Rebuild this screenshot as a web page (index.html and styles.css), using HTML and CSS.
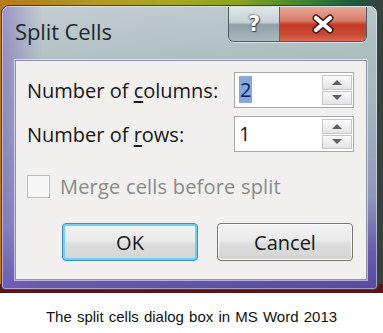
FILE: index.html
```html
<!DOCTYPE html>
<html>
<head>
<meta charset="utf-8">
<link rel="stylesheet" href="styles.css">
</head>
<body>
<div class="desktop">
  <div class="window">
    <div class="titlebar">
      <span class="title">Split Cells</span>
      <div class="caption-btns">
        <span class="cbtn help">?</span>
        <span class="cbtn close">
          <svg width="26" height="20" viewBox="0 0 26 20">
            <path d="M6 4 L20 16 M20 4 L6 16" stroke="#3a1a14" stroke-width="7" stroke-linecap="round"/>
            <path d="M6 4 L20 16 M20 4 L6 16" stroke="#ffffff" stroke-width="4.2" stroke-linecap="round"/>
          </svg>
        </span>
      </div>
    </div>
    <div class="panel">
      <div class="field">
        <span class="label">Number of <u>c</u>olumns:</span>
        <div class="spin">
          <span class="value"><span class="sel">2</span></span>
          <div class="arrows">
            <span class="arrow"><span class="tri up"></span></span>
            <span class="arrow"><span class="tri down"></span></span>
          </div>
        </div>
      </div>
      <div class="field">
        <span class="label">Number of <u>r</u>ows:</span>
        <div class="spin">
          <span class="value">1</span>
          <div class="arrows">
            <span class="arrow"><span class="tri up"></span></span>
            <span class="arrow"><span class="tri down"></span></span>
          </div>
        </div>
      </div>
      <div class="check-row">
        <span class="checkbox"></span>
        <span class="check-label">Merge cells before split</span>
      </div>
      <div class="buttons">
        <span class="btn ok">OK</span>
        <span class="btn">Cancel</span>
      </div>
    </div>
  </div>
</div>
<p class="caption">The split cells dialog box in MS Word 2013</p>
</body>
</html>
```
FILE: styles.css
```css
* { box-sizing: border-box; }
body {
  margin: 0;
  background: #ffffff;
  width: 383px;
  height: 333px;
  overflow: hidden;
}
.desktop {
  width: 383px;
  height: 293px;
  padding: 5px 5px 3px 1px;
  background:
    linear-gradient(to bottom, transparent 97%, #5a1616 97%),
    linear-gradient(90deg, #b8781c 0%, #b09a20 25%, #a8a81c 45%, #8ca41e 62%, #3e8236 80%, #1f5a3a 92%, #38403c 100%);
}
.window {
  width: 377px;
  height: 285px;
  border: 1px solid #3a4048;
  border-radius: 8px 8px 4px 4px;
  background:
    linear-gradient(90deg, rgba(120,96,190,0.55) 0, rgba(120,96,190,0.35) 14px, rgba(120,96,190,0) 40px),
    linear-gradient(175deg, #c6ced3 0%, #aebfc0 22%, #a2b8bc 40%, #8f98bc 70%, #6a5cab 88%, #564a9e 100%);
  box-shadow: inset 0 0 0 1px rgba(255,255,255,0.45);
  display: flex;
  flex-direction: column;
  padding: 0 10px 9px 13px;
}
.titlebar {
  height: 54px;
  display: flex;
  justify-content: space-between;
  align-items: flex-start;
}
.title {
  font-family: "Open Sans", "Noto Sans", sans-serif;
  font-size: 22px;
  color: #1c2830;
  margin-top: 10px;
  letter-spacing: -0.1px;
}
.caption-btns {
  display: flex;
  height: 35px;
  margin-top: 1px;
  border: 1px solid #4e5a62;
  border-top: none;
  border-radius: 0 0 6px 6px;
  overflow: hidden;
  box-shadow: 0 1px 0 rgba(255,255,255,0.5);
}
.cbtn {
  display: flex;
  align-items: center;
  justify-content: center;
  height: 100%;
}
.help {
  width: 51px;
  border-right: 1px solid #5a666c;
  background: linear-gradient(to bottom, #dfe6e8 0%, #c6d2d6 45%, #8fa2a8 52%, #a8b8bc 100%);
  font-family: "DejaVu Sans", sans-serif;
  font-weight: bold;
  font-size: 21px;
  color: #ffffff;
  text-shadow: 0 0 2px #3a4650, 0 0 1px #3a4650, 1px 1px 1px #3a4650;
}
.close {
  width: 86px;
  background: linear-gradient(to bottom, #e8a898 0%, #d97c6a 40%, #c23a24 52%, #c84a34 80%, #d86a58 100%);
}
.panel {
  flex: 1;
  background: #f1f0ef;
  border: 1px solid #8a94a8;
  box-shadow: 0 0 0 1px rgba(255,255,255,0.55);
  padding: 11px 12px 0 11px;
  display: flex;
  flex-direction: column;
}
.field {
  display: flex;
  justify-content: space-between;
  align-items: center;
  height: 36px;
  margin-bottom: 8px;
}
.label, .check-label, .btn, .value {
  font-family: "Open Sans", "Noto Sans", sans-serif;
  font-size: 20px;
  color: #161616;
}
.label u { text-underline-offset: 3px; }
.spin {
  width: 120px;
  height: 36px;
  border: 1px solid #a7a9ad;
  background: #ffffff;
  display: flex;
  justify-content: space-between;
  align-items: center;
  padding: 2px 1px 2px 4px;
}
.value {
  font-size: 20px;
  line-height: 24px;
}
.sel {
  background: #86a9da;
  color: #10206a;
  padding: 0 1px;
}
.arrows {
  display: flex;
  flex-direction: column;
  gap: 1px;
  height: 100%;
}
.arrow {
  width: 30px;
  flex: 1;
  border: 1px solid #c4c6ca;
  background: linear-gradient(to bottom, #fafafa, #e4e4e6);
  display: flex;
  align-items: center;
  justify-content: center;
}
.tri {
  width: 0;
  height: 0;
  border-left: 5px solid transparent;
  border-right: 5px solid transparent;
}
.tri.up { border-bottom: 5px solid #5c6068; }
.tri.down { border-top: 5px solid #5c6068; }
.check-row {
  display: flex;
  align-items: center;
  gap: 10px;
  margin-top: 14px;
  height: 24px;
}
.checkbox {
  width: 23px;
  height: 23px;
  border: 1px solid #bdbdbd;
  background: #f6f6f6;
}
.check-label { color: #8a8a8a; letter-spacing: 0.2px; }
.buttons {
  display: flex;
  gap: 19px;
  margin-top: 25px;
  padding-left: 35px;
}
.btn {
  width: 136px;
  height: 38px;
  border: 1px solid #767676;
  border-radius: 4px;
  background: linear-gradient(to bottom, #f3f3f3 0%, #ebebeb 45%, #dddddd 55%, #d4d4d4 100%);
  box-shadow: inset 0 0 0 1px rgba(255,255,255,0.8);
  display: flex;
  align-items: center;
  justify-content: center;
  font-size: 20px;
}
.ok {
  border: 1px solid #3a8ccc;
  box-shadow: inset 0 0 0 2px #6fd0f2;
}
.caption {
  margin: 15px 0 0 0;
  text-align: center;
  font-family: "Liberation Sans", Arial, sans-serif;
  font-size: 15px;
  word-spacing: 1px;
  color: #111111;
}
```
